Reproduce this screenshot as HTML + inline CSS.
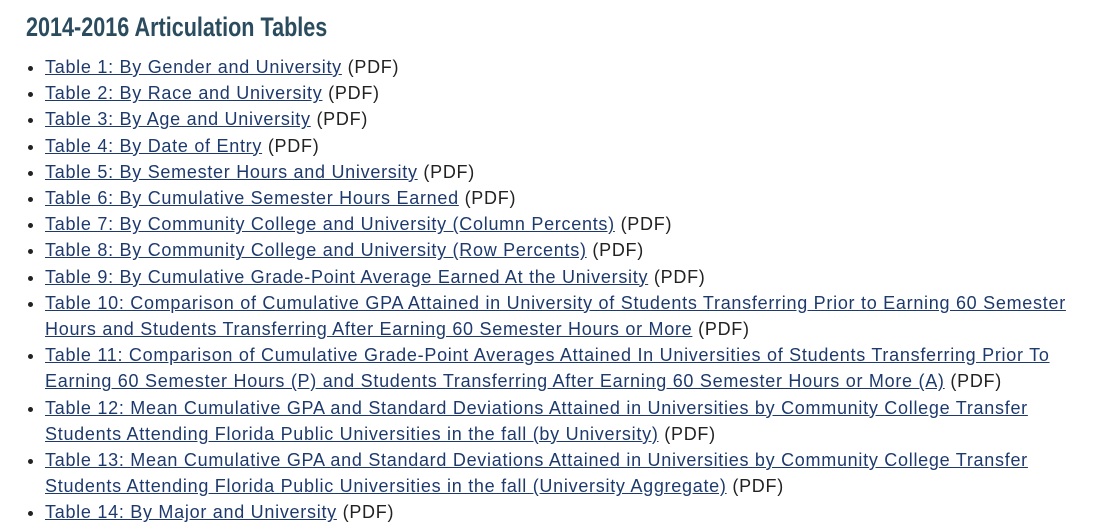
<!DOCTYPE html>
<html><head><meta charset="utf-8"><style>
body{margin:0;background:#fff;width:1102px;height:532px;overflow:hidden;font-family:"Liberation Sans",sans-serif;}
h2{position:absolute;left:26px;top:12px;margin:0;font-size:27px;font-weight:bold;color:#2b4c5e;transform:scaleX(0.80);transform-origin:left;white-space:nowrap}
ul{position:absolute;left:0;top:54px;margin:0;padding-left:45px;width:1060px;font-size:18px;line-height:26.2px;color:#222;letter-spacing:0.72px}
li{white-space:nowrap}
a{color:#1e3a6d;text-decoration:underline}
</style></head><body>
<h2>2014-2016 Articulation Tables</h2>
<ul>
<li><a>Table 1: By Gender and University</a> (PDF)</li>
<li><a>Table 2: By Race and University</a> (PDF)</li>
<li><a>Table 3: By Age and University</a> (PDF)</li>
<li><a>Table 4: By Date of Entry</a> (PDF)</li>
<li><a>Table 5: By Semester Hours and University</a> (PDF)</li>
<li><a>Table 6: By Cumulative Semester Hours Earned</a> (PDF)</li>
<li><a>Table 7: By Community College and University (Column Percents)</a> (PDF)</li>
<li><a>Table 8: By Community College and University (Row Percents)</a> (PDF)</li>
<li><a>Table 9: By Cumulative Grade-Point Average Earned At the University</a> (PDF)</li>
<li><a>Table 10: Comparison of Cumulative GPA Attained in University of Students Transferring Prior to Earning 60 Semester<br>Hours and Students Transferring After Earning 60 Semester Hours or More</a> (PDF)</li>
<li><a>Table 11: Comparison of Cumulative Grade-Point Averages Attained In Universities of Students Transferring Prior To<br>Earning 60 Semester Hours (P) and Students Transferring After Earning 60 Semester Hours or More (A)</a> (PDF)</li>
<li><a>Table 12: Mean Cumulative GPA and Standard Deviations Attained in Universities by Community College Transfer<br>Students Attending Florida Public Universities in the fall (by University)</a> (PDF)</li>
<li><a>Table 13: Mean Cumulative GPA and Standard Deviations Attained in Universities by Community College Transfer<br>Students Attending Florida Public Universities in the fall (University Aggregate)</a> (PDF)</li>
<li><a>Table 14: By Major and University</a> (PDF)</li>
</ul>
</body></html>
